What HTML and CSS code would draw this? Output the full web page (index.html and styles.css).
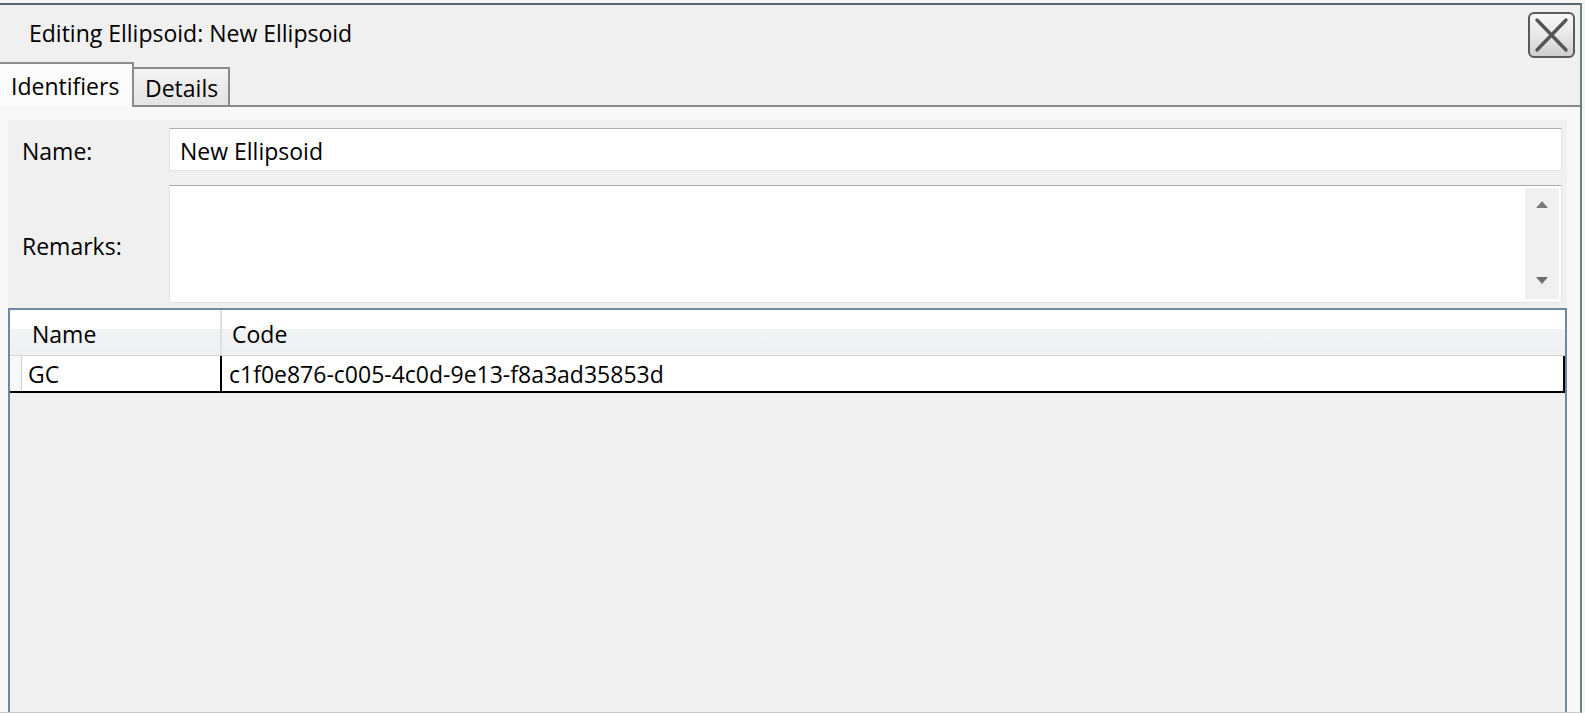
FILE: index.html
```html
<!DOCTYPE html>
<html>
<head>
<meta charset="utf-8">
<title>Editing Ellipsoid</title>
<link rel="stylesheet" href="styles.css">
</head>
<body>
<div class="dialog">
  <div class="titlebar">
    <span class="title">Editing Ellipsoid: New Ellipsoid</span>
    <button class="close" aria-label="Close">
      <svg width="47" height="46" viewBox="0 0 47 46">
        <defs>
          <linearGradient id="cg" x1="0" y1="0" x2="0" y2="1">
            <stop offset="0" stop-color="#f7f7f7"/>
            <stop offset="0.5" stop-color="#e8e8e8"/>
            <stop offset="1" stop-color="#cdcdcd"/>
          </linearGradient>
        </defs>
        <rect x="1" y="1" width="45" height="44" rx="5" ry="5" fill="url(#cg)" stroke="#5a5a5a" stroke-width="2"/>
        <path d="M9 8 L38 38 M38 8 L9 38" stroke="#555" stroke-width="3.4" stroke-linecap="round"/>
      </svg>
    </button>
  </div>
  <div class="tabs">
    <div class="tab tab-active">Identifiers</div>
    <div class="tab tab-idle">Details</div>
    <div class="tab-fill"></div>
  </div>
  <div class="panel">
    <div class="form">
      <div class="label label-name">Name:</div>
      <div class="input">New Ellipsoid</div>
      <div class="label label-remarks">Remarks:</div>
      <div class="textarea">
        <div class="scrollbar">
          <span class="arrow arrow-up"></span>
          <span class="arrow arrow-down"></span>
        </div>
      </div>
    </div>
    <div class="datagrid">
      <div class="grid-header">
        <div class="rowhdr"></div>
        <div class="hcell hcell-name">Name</div>
        <div class="hcell hcell-code">Code</div>
      </div>
      <div class="grid-row">
        <div class="rowhdr rowhdr-data"></div>
        <div class="cell cell-name">GC</div>
        <div class="cell cell-code">c1f0e876-c005-4c0d-9e13-f8a3ad35853d</div>
      </div>
    </div>
  </div>
</div>
</body>
</html>
```

FILE: styles.css
```css
* { box-sizing: border-box; }

html, body {
  margin: 0;
  padding: 0;
  height: 713px;
  overflow: hidden;
}

body {
  background: #f5f7f7;
  font-family: "Open Sans", "Noto Sans", sans-serif;
  font-size: 23px;
  line-height: 30px;
  color: #000;
}

.dialog {
  margin-top: 3px;
  width: 1582px;
  height: 710px;
  border-top: 2px solid #56696a;
  border-right: 2px solid #6f7f80;
  border-bottom: 1px solid #c9cbcb;
  background: #f0f0f0;
  display: flex;
  flex-direction: column;
}

.titlebar {
  height: 57px;
  display: flex;
  justify-content: space-between;
  align-items: flex-start;
  padding: 13px 5px 0 29px;
  flex: none;
}

.close {
  margin-top: -6px;
  padding: 0;
  border: 0;
  background: none;
  width: 47px;
  height: 46px;
  display: block;
}

.close svg { display: block; }

.tabs {
  height: 45px;
  display: flex;
  align-items: flex-end;
  flex: none;
}

.tab {
  flex: none;
  white-space: nowrap;
}

.tab-active {
  width: 134px;
  height: 45px;
  background: #fbfbfb;
  border-top: 2px solid #8c8c8c;
  border-right: 2px solid #8c8c8c;
  padding: 7px 0 0 11px;
  position: relative;
  z-index: 1;
}

.tab-idle {
  width: 96px;
  height: 40px;
  border-top: 2px solid #8a8a8a;
  border-right: 2px solid #8a8a8a;
  border-bottom: 2px solid #8a8a8a;
  background: linear-gradient(#f3f3f3, #e4e4e4);
  padding: 4px 0 0 11px;
}

.tab-fill {
  flex: 1;
  height: 2px;
  background: #8a8a8a;
}

.panel {
  flex: 1;
  background: #f8f8f8;
  padding: 13px 13px 0 8px;
  display: flex;
  flex-direction: column;
  min-height: 0;
}

.form {
  background: #f0f0f0;
  display: grid;
  grid-template-columns: 161px 1fr;
  grid-template-rows: 43px 118px;
  row-gap: 14px;
  padding: 8px 5px 5px 0;
  flex: none;
}

.label {
  padding-left: 14px;
  align-self: center;
}

.label-name { padding-top: 3px; }
.label-remarks { padding-top: 3px; }

.input {
  background: #fff;
  border: 1px solid #e3e3e8;
  border-top-color: #abadb3;
  padding: 7px 10px 0;
  white-space: nowrap;
}

.textarea {
  background: #fff;
  border: 1px solid #e3e3e8;
  border-top-color: #abadb3;
  display: flex;
  justify-content: flex-end;
  padding: 2px 2px 3px 0;
}

.scrollbar {
  width: 34px;
  background: #f0f0f0;
  display: flex;
  flex-direction: column;
  justify-content: space-between;
  align-items: center;
  padding: 13px 0 15px;
}

.arrow {
  width: 0;
  height: 0;
  border-left: 6px solid transparent;
  border-right: 6px solid transparent;
}

.arrow-up { border-bottom: 7px solid #7a7a7a; }
.arrow-down { border-top: 7px solid #6e6e6e; }

.datagrid {
  flex: 1;
  border: 2px solid #6e88a6;
  border-bottom: 0;
  background: #f0f0f0;
  min-height: 0;
}

.grid-header {
  height: 46px;
  display: flex;
  background: linear-gradient(#ffffff 0, #ffffff 42%, #f2f3f4 42%, #eff0f1 100%);
  border-bottom: 1px solid #d5d5d5;
}

.rowhdr {
  width: 12px;
  flex: none;
}

.rowhdr-data {
  background: #f8f8f8;
  border-right: 1px solid #d0d0d0;
}

.hcell {
  display: flex;
  align-items: center;
  padding-top: 3px;
  white-space: nowrap;
}

.hcell-name {
  width: 200px;
  padding-left: 10px;
  border-right: 2px solid #e0e0e0;
}

.hcell-code {
  flex: 1;
  padding-left: 10px;
}

.grid-row {
  height: 37px;
  display: flex;
  background: #fff;
  border-bottom: 2px solid #000;
}

.cell {
  display: flex;
  align-items: center;
  white-space: nowrap;
}

.cell-name {
  width: 200px;
  padding-left: 6px;
  border-right: 2px solid #000;
}

.cell-code {
  flex: 1;
  padding-left: 7px;
  border-right: 2px solid #000;
}
```
